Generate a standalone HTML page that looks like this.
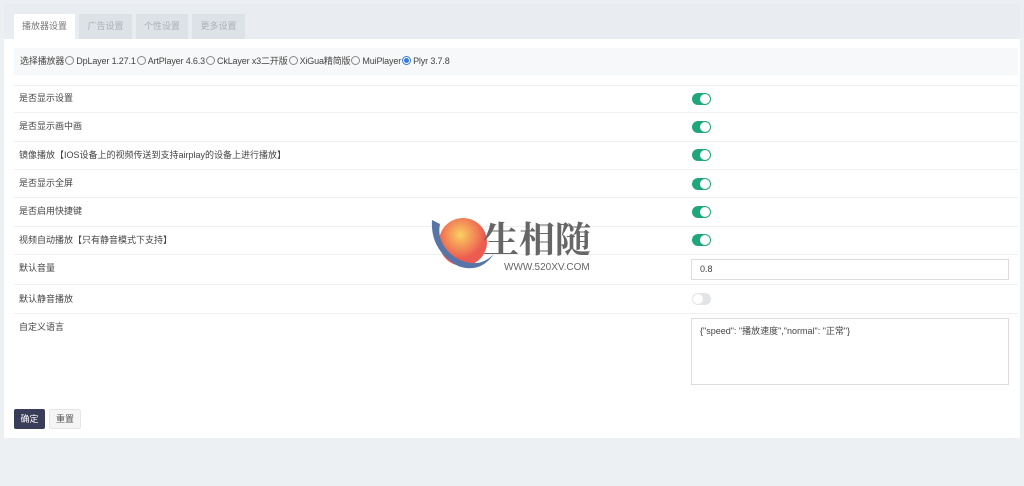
<!DOCTYPE html><html><head><meta charset="utf-8"><style>
body{margin:0;width:1024px;height:486px;background:#edf0f3;font-family:"Liberation Sans","Noto Sans CJK SC",sans-serif;font-size:9px;color:#333;position:relative;overflow:hidden}
.panel{position:absolute;left:4px;top:4px;width:1016px;height:434px;background:#fff}
.tabbar{position:absolute;left:0;top:0;width:1016px;height:35px;background:#e9edf1}
.tab{position:absolute;top:10px;height:25px;line-height:25px;text-align:center;background:#dde2e7;color:#aab0b8}
.tab.a{background:#fff;color:#777}
.sel{position:absolute;left:10px;top:44px;width:1004px;height:27px;background:#f7f8f9;line-height:27px;padding-left:6px;box-sizing:border-box;color:#444;letter-spacing:-0.15px}
.r{display:inline-block;width:7px;height:7px;border:1px solid #888;border-radius:50%;vertical-align:-1px;margin:0 2px 0 1px}
.r.on{border-color:#3a7bd5;background:radial-gradient(#3a7bd5 45%,#fff 55%)}
.line{position:absolute;left:10px;width:1004px;height:1px;background:#f0f0f0}
.lab{position:absolute;left:15px;color:#444}
.tg{position:absolute;left:688px;width:19px;height:12px;border-radius:6px;background:#1fa67a}
.tg:after{content:"";position:absolute;right:1px;top:1px;width:10px;height:10px;border-radius:50%;background:#fff}
.tg.off{background:#e2e4e6}.tg.off:after{left:1px;right:auto}
.inp{position:absolute;left:687px;width:318px;border:1px solid #ddd;box-sizing:border-box;padding:0 8px;color:#444}
.btn{position:absolute;top:405px;height:20px;line-height:20px;width:31px;text-align:center;border-radius:2px}
</style></head><body><div class="panel">
<div class="tabbar">
<div class="tab a" style="left:10px;width:61px">播放器设置</div>
<div class="tab" style="left:75px;width:53px">广告设置</div>
<div class="tab" style="left:132px;width:52px">个性设置</div>
<div class="tab" style="left:188px;width:53px">更多设置</div>
</div>
<div class="sel">选择播放器<span class="r"></span>DpLayer 1.27.1<span class="r"></span>ArtPlayer 4.6.3<span class="r"></span>CkLayer x3二开版<span class="r"></span>XiGua精简版<span class="r"></span>MuiPlayer<span class="r on"></span>Plyr 3.7.8</div>
<div class="line" style="top:81px"></div>
<div class="lab" style="top:87px">是否显示设置</div><div class="tg" style="top:89px"></div>
<div class="line" style="top:108px"></div>
<div class="lab" style="top:115px">是否显示画中画</div><div class="tg" style="top:117px"></div>
<div class="line" style="top:137px"></div>
<div class="lab" style="top:144px">镜像播放【IOS设备上的视频传送到支持airplay的设备上进行播放】</div><div class="tg" style="top:145px"></div>
<div class="line" style="top:165px"></div>
<div class="lab" style="top:172px">是否显示全屏</div><div class="tg" style="top:174px"></div>
<div class="line" style="top:193px"></div>
<div class="lab" style="top:200px">是否启用快捷键</div><div class="tg" style="top:202px"></div>
<div class="line" style="top:222px"></div>
<div class="lab" style="top:229px">视频自动播放【只有静音模式下支持】</div><div class="tg" style="top:230px"></div>
<div class="line" style="top:250px"></div>
<div class="lab" style="top:257px">默认音量</div><div class="inp" style="top:255px;height:21px;line-height:19px">0.8</div>
<div class="line" style="top:280px"></div>
<div class="lab" style="top:288px">默认静音播放</div><div class="tg off" style="top:289px"></div>
<div class="line" style="top:309px"></div>
<div class="lab" style="top:316px">自定义语言</div><div class="inp" style="top:314px;height:67px;padding-top:5px">{"speed": "播放速度","normal": "正常"}</div>
<div class="btn" style="left:10px;background:#393d5a;color:#fff">确定</div>
<div class="btn" style="left:45px;width:30px;background:#f5f5f5;border:1px solid #e6e6e6;height:18px;line-height:18px;color:#555">重置</div>
</div>
<svg style="position:absolute;left:428px;top:210px" width="180" height="70">
<defs><radialGradient id="g" cx="0.45" cy="0.35"><stop offset="0" stop-color="#fbd060"/><stop offset="1" stop-color="#ec5a50"/></radialGradient></defs>
<circle cx="35" cy="32" r="24" fill="url(#g)"/>
<path d="M4 10 Q2 40 30 56 Q52 64 66 44 Q50 60 28 48 Q8 34 12 14 Z" fill="#5875a8"/>
<text x="55" y="42" font-size="36" fill="#666" font-family="Noto Serif CJK SC,serif" font-weight="bold">生相随</text>
<text x="76" y="60" font-size="10" fill="#666">WWW.520XV.COM</text>
</svg>
</body></html>
